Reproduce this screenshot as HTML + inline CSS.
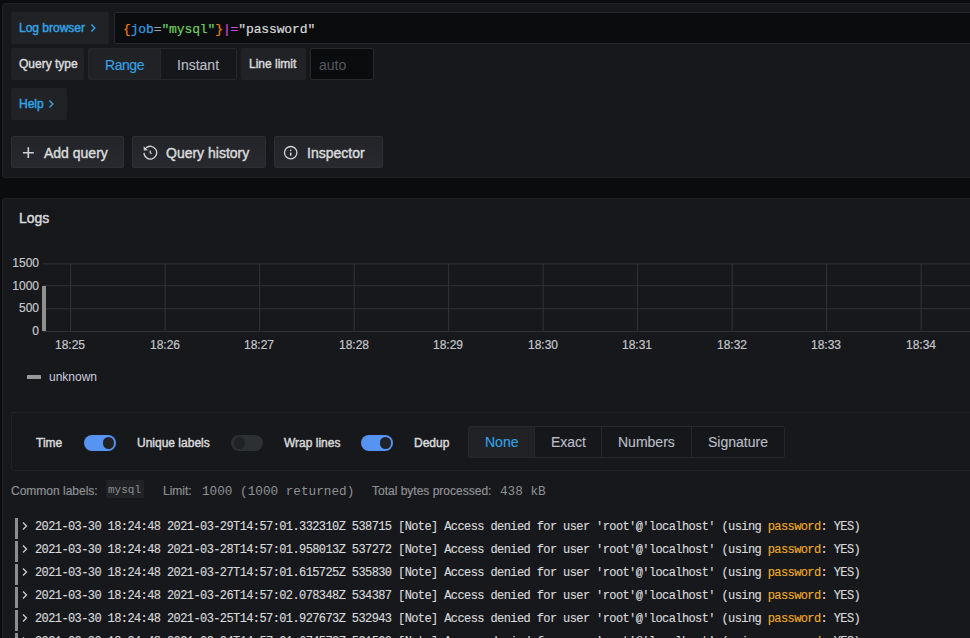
<!DOCTYPE html><html><head><meta charset="utf-8"><style>
*{box-sizing:border-box;margin:0;padding:0}
html,body{width:970px;height:638px;overflow:hidden;background:#0b0c0e;font-family:"Liberation Sans",sans-serif;color:#ccccdc}
.abs{position:absolute}
.t{position:absolute;white-space:nowrap}
.md{-webkit-text-stroke:0.45px currentColor}
.panel{position:absolute;background:#17181c;border:1px solid #1f2125;border-radius:3px}
.lbl{position:absolute;background:#202226;border-radius:2px;height:32px}
.blue{color:#33a2e5}
.inp{position:absolute;background:#0b0c0e;border:1px solid #272a2d;border-radius:2px}
.btn{position:absolute;background:linear-gradient(180deg,#222428 0%,#27292e 100%);border:1px solid #2c2e33;border-radius:2px;height:32px}
.mono{font-family:"Liberation Mono",monospace}
.grid{position:absolute;background:#2c2e32}
.tog{position:absolute;width:32px;height:16px;border-radius:8px;background:#5794f2}
.tog::after{content:"";position:absolute;left:18.5px;top:2.5px;width:11.5px;height:11.5px;border-radius:50%;background:#202226}
.tog.off{background:#2c3033}
.tog.off::after{left:2.5px;background:#202226}
.ylab{font-size:12px;line-height:14px;color:#c4c6ca;text-align:right;-webkit-text-stroke:0.2px currentColor}
.xlab{font-size:12px;line-height:14px;color:#c4c6ca;width:40px;text-align:center;-webkit-text-stroke:0.2px currentColor}
.opt{font-size:12px;line-height:14px;color:#d8d9da}
.sec{font-size:12px;line-height:14px;color:#8e9093;-webkit-text-stroke:0.2px currentColor}
.row{position:absolute;left:15px;height:21px;width:950px}
.row .bar{position:absolute;left:0;top:0;width:3px;height:21px;background:#8e8e8e}
.row svg{position:absolute;left:7px;top:3px}
.row .tx{position:absolute;left:20px;top:2px;font-family:"Liberation Mono",monospace;font-size:12px;letter-spacing:-0.6px;line-height:14px;white-space:pre;color:#d8d9da;-webkit-text-stroke:0.15px currentColor}
.hl{color:#eeaa22}
</style></head><body>
<div class="panel" style="left:2px;top:3px;width:990px;height:175px"></div>
<div class="lbl" style="left:11px;top:12px;width:98px"></div>
<div class="t blue md" style="left:19px;top:21px;font-size:12px;line-height:14px">Log browser</div>
<svg class="abs" style="left:90px;top:23px" width="7" height="10" viewBox="0 0 7 10"><path d="M1.4 1.5 L4.8 5 L1.4 8.5" fill="none" stroke="#33a2e5" stroke-width="1.45"/></svg>
<div class="inp" style="left:114px;top:12px;width:870px;height:32px"></div>
<div class="t mono" style="left:123px;top:21px;font-size:13px;letter-spacing:-0.12px;line-height:18px;color:#d8d9da;-webkit-text-stroke:0.2px currentColor"><span style="color:#eb7b18">{</span><span style="color:#33a2e5">job</span><span style="color:#a0a0a8">=</span><span style="color:#6ccf62">"mysql"</span><span style="color:#eb7b18">}</span><span style="color:#d44ae0">|=</span>"password"</div>
<div class="lbl" style="left:11px;top:48px;width:73px"></div>
<div class="t md" style="left:19px;top:57px;font-size:12px;line-height:14px;color:#d8d9da">Query type</div>
<div class="abs" style="left:88px;top:48px;width:149px;height:32px;border:1px solid #25282b;border-radius:2px;background:#16171b"></div>
<div class="abs" style="left:89px;top:49px;width:71px;height:30px;background:#202226"></div>
<div class="abs" style="left:160px;top:49px;width:1px;height:30px;background:#25282b"></div>
<div class="t blue" style="left:105px;top:56.7px;font-size:14px;line-height:16px;letter-spacing:-0.45px;-webkit-text-stroke:0.15px currentColor">Range</div>
<div class="t" style="left:177px;top:56.7px;font-size:14px;line-height:16px;color:#b8bcc3;-webkit-text-stroke:0.15px currentColor">Instant</div>
<div class="lbl" style="left:241px;top:48px;width:65px"></div>
<div class="t md" style="left:249px;top:57px;font-size:12px;line-height:14px;color:#d8d9da">Line limit</div>
<div class="inp" style="left:310px;top:48px;width:64px;height:32px"></div>
<div class="t" style="left:319px;top:57px;font-size:14px;line-height:16px;color:#55585e">auto</div>
<div class="lbl" style="left:11px;top:88px;width:56px"></div>
<div class="t blue md" style="left:19px;top:97px;font-size:12px;line-height:14px">Help</div>
<svg class="abs" style="left:48px;top:99px" width="7" height="10" viewBox="0 0 7 10"><path d="M1.4 1.5 L4.8 5 L1.4 8.5" fill="none" stroke="#33a2e5" stroke-width="1.45"/></svg>
<div class="btn" style="left:11px;top:136px;width:113px"></div>
<svg class="abs" style="left:22px;top:146px" width="13" height="13" viewBox="0 0 13 13"><path d="M6.3 1.2 V12 M0.9 6.7 H11.8" stroke="#d0d1d3" stroke-width="1.6"/></svg>
<div class="t md" style="left:44px;top:145px;font-size:14px;line-height:16px;color:#d8d9da">Add query</div>
<div class="btn" style="left:132px;top:136px;width:134px"></div>
<svg class="abs" style="left:142px;top:145px" width="16" height="16" viewBox="0 0 16 16"><path d="M1.9 7.9 A6.4 6.4 0 1 0 3.9 3" fill="none" stroke="#d0d1d3" stroke-width="1.35"/><path d="M1.6 1.2 L1.8 5.6 L6 5.2 Z" fill="#d0d1d3"/><path d="M8.2 5.4 V7.7 L9.6 8.7" fill="none" stroke="#d0d1d3" stroke-width="1.3"/></svg>
<div class="t md" style="left:166px;top:145px;font-size:14px;line-height:16px;color:#d8d9da">Query history</div>
<div class="btn" style="left:274px;top:136px;width:109px"></div>
<svg class="abs" style="left:283px;top:145px" width="16" height="16" viewBox="0 0 16 16"><circle cx="7.7" cy="7.7" r="6.2" fill="none" stroke="#d0d1d3" stroke-width="1.3"/><path d="M7.7 7.6 V10.8" stroke="#d0d1d3" stroke-width="1.5"/><circle cx="7.7" cy="5.3" r="0.85" fill="#d0d1d3"/></svg>
<div class="t md" style="left:307px;top:145px;font-size:14px;line-height:16px;color:#d8d9da">Inspector</div>
<div class="panel" style="left:2px;top:198px;width:990px;height:460px"></div>
<div class="t md" style="left:19px;top:210px;font-size:14px;line-height:16px;color:#d8d9da">Logs</div>
<svg class="abs" style="left:0;top:0" width="970" height="400"><line x1="43" x2="970" y1="263.9" y2="263.9" stroke="#323438" stroke-width="1"/><line x1="43" x2="970" y1="285.8" y2="285.8" stroke="#323438" stroke-width="1"/><line x1="43" x2="970" y1="308.8" y2="308.8" stroke="#323438" stroke-width="1"/><line x1="43" x2="970" y1="331.6" y2="331.6" stroke="#323438" stroke-width="1"/><line x1="70.65" x2="70.65" y1="263.9" y2="331.6" stroke="#323438" stroke-width="1"/><line x1="165.15" x2="165.15" y1="263.9" y2="331.6" stroke="#323438" stroke-width="1"/><line x1="259.65" x2="259.65" y1="263.9" y2="331.6" stroke="#323438" stroke-width="1"/><line x1="354.15" x2="354.15" y1="263.9" y2="331.6" stroke="#323438" stroke-width="1"/><line x1="448.65" x2="448.65" y1="263.9" y2="331.6" stroke="#323438" stroke-width="1"/><line x1="543.15" x2="543.15" y1="263.9" y2="331.6" stroke="#323438" stroke-width="1"/><line x1="637.65" x2="637.65" y1="263.9" y2="331.6" stroke="#323438" stroke-width="1"/><line x1="732.15" x2="732.15" y1="263.9" y2="331.6" stroke="#323438" stroke-width="1"/><line x1="826.65" x2="826.65" y1="263.9" y2="331.6" stroke="#323438" stroke-width="1"/><line x1="921.15" x2="921.15" y1="263.9" y2="331.6" stroke="#323438" stroke-width="1"/></svg>
<div class="t ylab" style="right:931px;top:256px">1500</div>
<div class="t ylab" style="right:931px;top:279px">1000</div>
<div class="t ylab" style="right:931px;top:301px">500</div>
<div class="t ylab" style="right:931px;top:324px">0</div>
<div class="t xlab" style="left:50px;top:338px">18:25</div>
<div class="t xlab" style="left:145px;top:338px">18:26</div>
<div class="t xlab" style="left:239px;top:338px">18:27</div>
<div class="t xlab" style="left:334px;top:338px">18:28</div>
<div class="t xlab" style="left:428px;top:338px">18:29</div>
<div class="t xlab" style="left:523px;top:338px">18:30</div>
<div class="t xlab" style="left:617px;top:338px">18:31</div>
<div class="t xlab" style="left:712px;top:338px">18:32</div>
<div class="t xlab" style="left:806px;top:338px">18:33</div>
<div class="t xlab" style="left:901px;top:338px">18:34</div>
<div class="abs" style="left:42px;top:286px;width:4px;height:45px;background:#8f8f8f"></div>
<div class="abs" style="left:27px;top:375px;width:14px;height:4px;border-radius:0.5px;background:#999"></div>
<div class="t" style="left:49px;top:370px;font-size:12px;line-height:14px;color:#ccccdc">unknown</div>
<div class="abs" style="left:11px;top:412px;width:980px;height:59px;border:1px solid #202226;border-radius:2px"></div>
<div class="t opt md" style="left:36px;top:436px">Time</div>
<div class="tog" style="left:84px;top:434.5px"></div>
<div class="t opt md" style="left:137px;top:436px">Unique labels</div>
<div class="tog off" style="left:231px;top:434.5px"></div>
<div class="t opt md" style="left:284px;top:436px">Wrap lines</div>
<div class="tog" style="left:361px;top:434.5px"></div>
<div class="t opt md" style="left:414px;top:436px">Dedup</div>
<div class="abs" style="left:468px;top:426px;width:317px;height:32px;border:1px solid #25282b;border-radius:2px;background:#16171b"></div>
<div class="abs" style="left:469px;top:427px;width:65px;height:30px;background:#202226"></div>
<div class="abs" style="left:534px;top:427px;width:1px;height:30px;background:#25282b"></div>
<div class="abs" style="left:601px;top:427px;width:1px;height:30px;background:#25282b"></div>
<div class="abs" style="left:691px;top:427px;width:1px;height:30px;background:#25282b"></div>
<div class="t" style="left:485px;top:434px;font-size:14px;line-height:16px;color:#33a2e5;-webkit-text-stroke:0.15px currentColor">None</div>
<div class="t" style="left:551px;top:434px;font-size:14px;line-height:16px;color:#b8bcc3;-webkit-text-stroke:0.15px currentColor">Exact</div>
<div class="t" style="left:618px;top:434px;font-size:14px;line-height:16px;color:#b8bcc3;-webkit-text-stroke:0.15px currentColor">Numbers</div>
<div class="t" style="left:708px;top:434px;font-size:14px;line-height:16px;color:#b8bcc3;-webkit-text-stroke:0.15px currentColor">Signature</div>
<div class="t sec" style="left:11px;top:483.5px">Common labels:</div>
<div class="abs" style="left:106px;top:480px;width:38px;height:18px;background:#202226;border-radius:1px"></div>
<div class="t mono" style="left:108px;top:484px;font-size:11px;line-height:13px;color:#8e9093">mysql</div>
<div class="t sec" style="left:163px;top:483.5px">Limit:</div>
<div class="t mono" style="left:202px;top:483.5px;font-size:12.7px;line-height:15px;color:#8e9093">1000 (1000 returned)</div>
<div class="t sec" style="left:372px;top:483.5px">Total bytes processed:</div>
<div class="t mono" style="left:500px;top:483.5px;font-size:12.7px;line-height:15px;color:#8e9093">438 kB</div>
<div class="row" style="top:518px"><div class="bar"></div><svg width="6" height="10" viewBox="0 0 6 10"><path d="M1 1.5 L4.5 5 L1 8.5" fill="none" stroke="#ccccdc" stroke-width="1.3"/></svg><div class="tx">2021-03-30 18:24:48 2021-03-29T14:57:01.332310Z 538715 [Note] Access denied for user 'root'@'localhost' (using <span class="hl">password</span>: YES)</div></div>
<div class="row" style="top:541px"><div class="bar"></div><svg width="6" height="10" viewBox="0 0 6 10"><path d="M1 1.5 L4.5 5 L1 8.5" fill="none" stroke="#ccccdc" stroke-width="1.3"/></svg><div class="tx">2021-03-30 18:24:48 2021-03-28T14:57:01.958013Z 537272 [Note] Access denied for user 'root'@'localhost' (using <span class="hl">password</span>: YES)</div></div>
<div class="row" style="top:564px"><div class="bar"></div><svg width="6" height="10" viewBox="0 0 6 10"><path d="M1 1.5 L4.5 5 L1 8.5" fill="none" stroke="#ccccdc" stroke-width="1.3"/></svg><div class="tx">2021-03-30 18:24:48 2021-03-27T14:57:01.615725Z 535830 [Note] Access denied for user 'root'@'localhost' (using <span class="hl">password</span>: YES)</div></div>
<div class="row" style="top:587px"><div class="bar"></div><svg width="6" height="10" viewBox="0 0 6 10"><path d="M1 1.5 L4.5 5 L1 8.5" fill="none" stroke="#ccccdc" stroke-width="1.3"/></svg><div class="tx">2021-03-30 18:24:48 2021-03-26T14:57:02.078348Z 534387 [Note] Access denied for user 'root'@'localhost' (using <span class="hl">password</span>: YES)</div></div>
<div class="row" style="top:610px"><div class="bar"></div><svg width="6" height="10" viewBox="0 0 6 10"><path d="M1 1.5 L4.5 5 L1 8.5" fill="none" stroke="#ccccdc" stroke-width="1.3"/></svg><div class="tx">2021-03-30 18:24:48 2021-03-25T14:57:01.927673Z 532943 [Note] Access denied for user 'root'@'localhost' (using <span class="hl">password</span>: YES)</div></div>
<div class="row" style="top:633px"><div class="bar"></div><svg width="6" height="10" viewBox="0 0 6 10"><path d="M1 1.5 L4.5 5 L1 8.5" fill="none" stroke="#ccccdc" stroke-width="1.3"/></svg><div class="tx">2021-03-30 18:24:48 2021-03-24T14:57:01.674573Z 531500 [Note] Access denied for user 'root'@'localhost' (using <span class="hl">password</span>: YES)</div></div>
</body></html>
